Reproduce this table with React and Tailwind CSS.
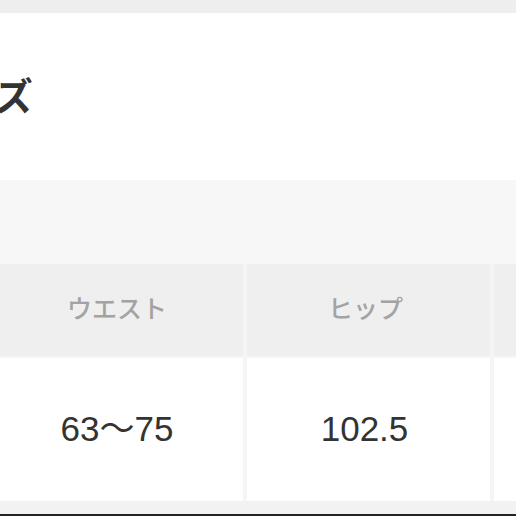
export default function App() {
  const jp = { fontFamily: '"Noto Sans CJK JP", sans-serif' };
  const num = { fontFamily: '"Liberation Sans", "Noto Sans CJK JP", sans-serif' };
  return (
    <div className="w-[516px] h-[516px] overflow-hidden bg-[#f2f2f2] flex flex-col" style={jp}>
      <div className="h-[13px] bg-[#eeeeee] shrink-0" />
      <div className="h-[167px] bg-white flex items-center shrink-0">
        <div className="ml-[-80px] mb-[6px] text-[38px] font-bold text-[#333333] leading-none whitespace-nowrap">サイズ</div>
      </div>
      <div className="h-[84px] bg-[#f7f7f7] shrink-0" />
      <div className="flex gap-[4px] ml-[-9px] bg-[#f5f5f5] shrink-0">
        <div className="w-[252px] shrink-0 flex flex-col gap-[2px]">
          <div className="h-[92px] bg-[#efefef] flex items-center justify-center pb-[4px] text-[25px] font-medium text-[#a3a3a3]">ウエスト</div>
          <div className="h-[143px] bg-white flex items-center justify-center text-[35px] text-[#333333]" style={num}>63〜75</div>
        </div>
        <div className="w-[243px] shrink-0 flex flex-col gap-[2px]">
          <div className="h-[92px] bg-[#efefef] flex items-center justify-center pb-[4px] pr-[6px] text-[25px] font-medium text-[#a3a3a3]">ヒップ</div>
          <div className="h-[143px] bg-white flex items-center justify-center pr-[8px] text-[35px] text-[#333333]" style={num}>102.5</div>
        </div>
        <div className="w-[40px] shrink-0 flex flex-col gap-[2px]">
          <div className="h-[92px] bg-[#efefef]" />
          <div className="h-[143px] bg-white" />
        </div>
      </div>
      <div className="h-[13px] bg-[#f2f2f2] shrink-0" />
      <div className="h-[3px] bg-[#222222] shrink-0" />
    </div>
  );
}
